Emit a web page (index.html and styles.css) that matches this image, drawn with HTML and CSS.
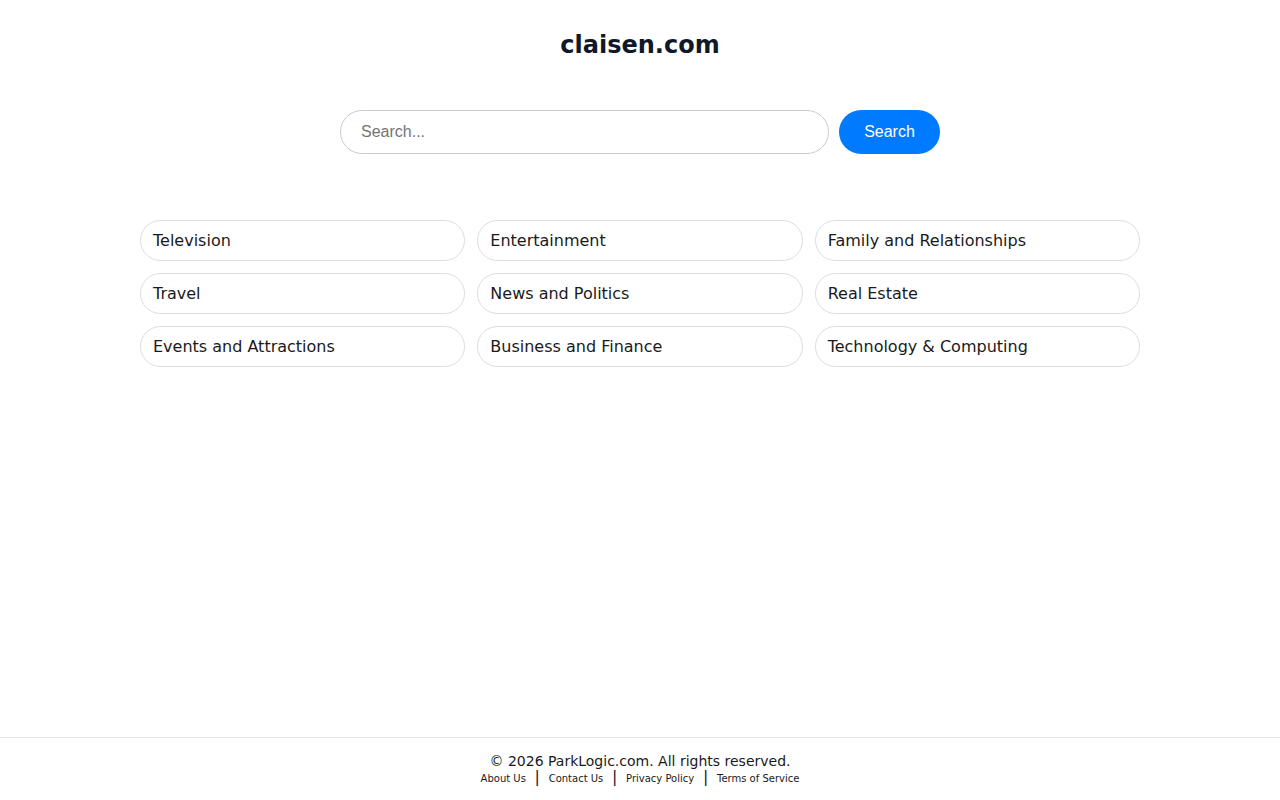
FILE: index.html
```html
<!DOCTYPE html>
<html lang="en">
<head>
    <meta charset="UTF-8">
    <meta name="viewport" content="width=device-width, initial-scale=1.0">
    <title>claisen.com</title>
    <link rel="stylesheet" href="styles.css">
</head>
<body>
<div class="page">
    <header class="header">
        <h1>claisen.com</h1>
    </header>

    <form class="search-form" onsubmit="return false;">
        <input type="text" class="search-input" placeholder="Search...">
        <button type="submit" class="search-btn">Search</button>
    </form>

    <div class="categories">
        <a href="#" class="category">Television</a>
        <a href="#" class="category">Entertainment</a>
        <a href="#" class="category">Family and Relationships</a>
        <a href="#" class="category">Travel</a>
        <a href="#" class="category">News and Politics</a>
        <a href="#" class="category">Real Estate</a>
        <a href="#" class="category">Events and Attractions</a>
        <a href="#" class="category">Business and Finance</a>
        <a href="#" class="category">Technology &amp; Computing</a>
    </div>
</div>

<footer class="footer">
    <p class="copyright">© 2026 ParkLogic.com. All rights reserved.</p>
    <div class="footer-links">
        <a href="#">About Us</a>
        <span class="sep">|</span>
        <a href="#">Contact Us</a>
        <span class="sep">|</span>
        <a href="#">Privacy Policy</a>
        <span class="sep">|</span>
        <a href="#">Terms of Service</a>
    </div>
</footer>
</body>
</html>
```

FILE: styles.css
```css
* {
    margin: 0;
    padding: 0;
    box-sizing: border-box;
}

body {
    font-family: 'DejaVu Sans', Verdana, sans-serif;
    color: #1a1a1a;
    background: #fff;
    min-height: 100vh;
    display: flex;
    flex-direction: column;
}

.page {
    flex: 1;
    width: 100%;
    max-width: 1000px;
    margin: 0 auto;
}

.header {
    text-align: center;
    padding-top: 31px;
}

h1 {
    font-size: 24px;
    font-weight: 700;
    color: #111827;
    line-height: 28px;
}

.search-form {
    display: flex;
    justify-content: center;
    gap: 10px;
    margin-top: 51px;
}

.search-input {
    width: 489px;
    height: 44px;
    padding: 0 20px;
    border: 1px solid #ccc;
    border-radius: 22px;
    font-family: 'Liberation Sans', Arial, sans-serif;
    font-size: 16px;
    color: #333;
    outline: none;
}

.search-input::placeholder {
    color: #757575;
}

.search-btn {
    width: 101px;
    height: 44px;
    border: none;
    border-radius: 22px;
    background: #007bff;
    color: #fff;
    font-family: 'Liberation Sans', Arial, sans-serif;
    font-size: 16px;
    cursor: pointer;
}

.categories {
    display: grid;
    grid-template-columns: repeat(3, 1fr);
    gap: 12px;
    margin-top: 66px;
}

.category {
    display: block;
    height: 41px;
    line-height: 39px;
    padding: 0 12px;
    border: 1px solid #ddd;
    border-radius: 21px;
    font-size: 16px;
    color: #1a1a1a;
    text-decoration: none;
}

.footer {
    border-top: 1px solid #e5e5e5;
    text-align: center;
    padding: 14px 0 12px;
}

.copyright {
    font-size: 14px;
    line-height: 18px;
    color: #1a1a1a;
}

.footer-links {
    font-size: 10px;
    line-height: 18px;
    margin-top: -2px;
}

.footer-links a {
    color: #1a1a1a;
    text-decoration: none;
}

.footer-links .sep {
    font-size: 16px;
    margin: 0 5.5px;
    color: #222;
}
```
